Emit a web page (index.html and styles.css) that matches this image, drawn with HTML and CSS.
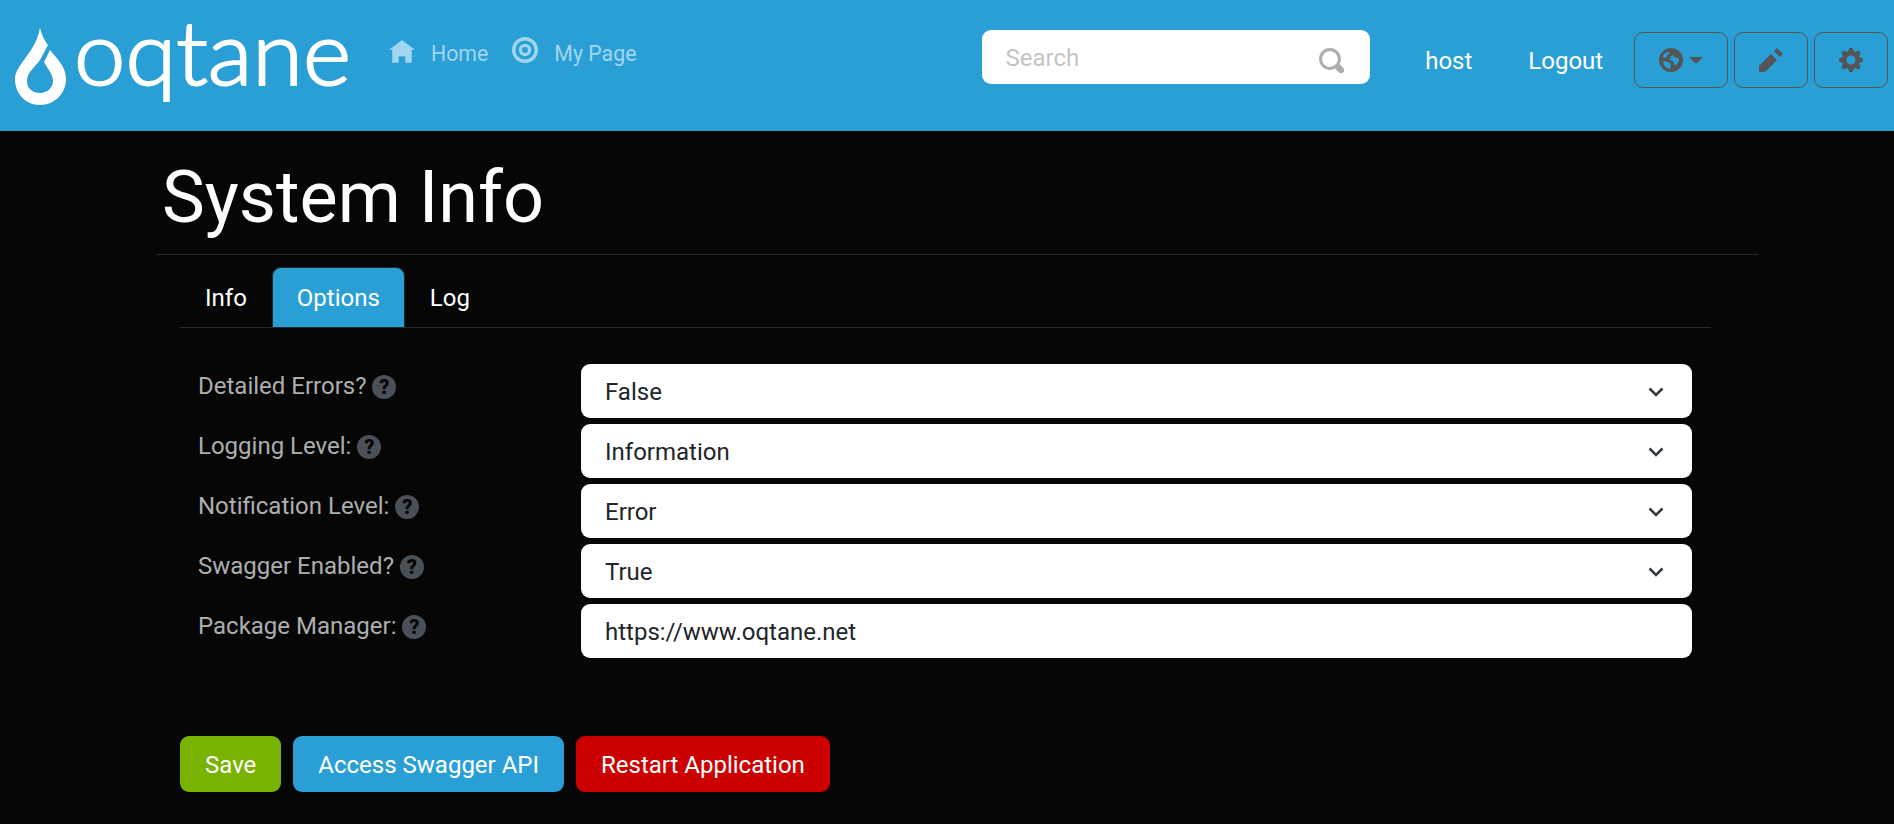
FILE: index.html
```html
<!DOCTYPE html>
<html>
<head>
	<title>System Info</title>
	<link rel="stylesheet" href="styles.css">
</head>
<body>
	<header class="topbar">
		<a class="logo">
			<svg class="logo-svg" width="389" height="131" viewBox="0 0 389 131">
				<path fill="#fff" d="M40 28C42 36 45 41 48 45L40 60C36 66 27 72 27 81 27 89 33 93 40 93 47 93 53 88 53 81 53 76 50 72 47 67L44 62 50 50C56 58 66 66 66 79 66 94 54 105 40 105 26 105 15 94 15 79 15 65 36 52 40 28Z"/>
				<text class="logo-text" x="74" y="85" textLength="277" lengthAdjust="spacingAndGlyphs">oqtane</text>
			</svg>
		</a>
		<nav class="menu">
			<a class="menu-link">
				<svg class="menu-icon" viewBox="0 0 8 8"><path d="M4 0l-4 3h1v4h2v-2h2v2h2v-4.03l1 .03-4-3z"/></svg>
				Home
			</a>
			<a class="menu-link">
				<svg class="menu-icon target" viewBox="0 0 26 26"><circle cx="13" cy="13" r="11.3" fill="none" stroke="#a1d6f0" stroke-width="3.4"/><circle cx="13" cy="13" r="4.6" fill="none" stroke="#a1d6f0" stroke-width="3.2"/></svg>
				My Page
			</a>
		</nav>
		<div class="search">
			<span class="search-text">Search</span>
			<svg class="search-icon" viewBox="0 0 8 8"><path d="M3.5 0c-1.93 0-3.5 1.57-3.5 3.5s1.57 3.5 3.5 3.5c.59 0 1.17-.14 1.66-.41a1 1 0 0 0 .13.13l1 1a1.02 1.02 0 1 0 1.44-1.44l-1-1a1 1 0 0 0-.16-.13c.27-.49.44-1.06.44-1.66 0-1.93-1.57-3.5-3.5-3.5zm0 1c1.39 0 2.5 1.11 2.5 2.5 0 .66-.24 1.27-.66 1.72-.01.01-.02.02-.03.03a1 1 0 0 0-.13.13c-.44.4-1.04.63-1.69.63-1.39 0-2.5-1.11-2.5-2.5s1.11-2.5 2.5-2.5z"/></svg>
		</div>
		<a class="user-link host">host</a>
		<a class="user-link logout">Logout</a>
		<button class="tool-btn globe-btn">
			<svg class="tool-icon" viewBox="0 0 24 24"><circle cx="12" cy="12" r="12"/><path fill="#2a9fd6" d="M5 6c1-1 3-2 5-2l1 1-3 2v2l-3 1-1-2zM12 8l2-1 1 2 4 1 1 2-1 3-2 2-2-1-1-3-3-1zM4 13l5 1 3 2-1 5-3-1-3-3z"/></svg>
			<span class="caret"></span>
		</button>
		<button class="tool-btn">
			<svg class="tool-icon" viewBox="0 0 8 8"><path d="M6 0l-1 1 2 2 1-1-2-2zm-2 2l-4 4v2h2l4-4-2-2z"/></svg>
		</button>
		<button class="tool-btn">
			<svg class="tool-icon" viewBox="0 0 8 8"><path d="M3.5 0l-.5 1.19c-.1.03-.19.08-.28.13l-1.19-.5-.72.72.5 1.19c-.05.1-.09.18-.13.28l-1.19.5v1l1.19.5c.04.1.08.18.13.28l-.5 1.19.72.72 1.19-.5c.09.04.18.09.28.13l.5 1.19h1l.5-1.19c.09-.04.19-.08.28-.13l1.19.5.72-.72-.5-1.19c.04-.09.09-.19.13-.28l1.19-.5v-1l-1.19-.5c-.03-.09-.08-.19-.13-.28l.5-1.19-.72-.72-1.19.5c-.09-.04-.19-.09-.28-.13l-.5-1.19h-1zm.5 2.5c.83 0 1.5.67 1.5 1.5s-.67 1.5-1.5 1.5-1.5-.67-1.5-1.5.67-1.5 1.5-1.5z"/></svg>
		</button>
	</header>

	<main class="content">
		<h1 class="page-title">System Info</h1>
		<div class="panel">
			<div class="tabs">
				<a class="tab">Info</a>
				<a class="tab active">Options</a>
				<a class="tab">Log</a>
			</div>
			<div class="rows">
				<div class="row">
					<label class="row-label">Detailed Errors? <span class="help">?</span></label>
					<div class="field select">False<svg class="chevron" viewBox="0 0 16 10"><path d="M1.5 1.5L8 8l6.5-6.5"/></svg></div>
				</div>
				<div class="row">
					<label class="row-label">Logging Level: <span class="help">?</span></label>
					<div class="field select">Information<svg class="chevron" viewBox="0 0 16 10"><path d="M1.5 1.5L8 8l6.5-6.5"/></svg></div>
				</div>
				<div class="row">
					<label class="row-label">Notification Level: <span class="help">?</span></label>
					<div class="field select">Error<svg class="chevron" viewBox="0 0 16 10"><path d="M1.5 1.5L8 8l6.5-6.5"/></svg></div>
				</div>
				<div class="row">
					<label class="row-label">Swagger Enabled? <span class="help">?</span></label>
					<div class="field select">True<svg class="chevron" viewBox="0 0 16 10"><path d="M1.5 1.5L8 8l6.5-6.5"/></svg></div>
				</div>
				<div class="row">
					<label class="row-label">Package Manager: <span class="help">?</span></label>
					<div class="field">https://www.oqtane.net</div>
				</div>
			</div>
			<div class="actions">
				<button class="btn btn-save">Save</button>
				<button class="btn btn-swagger">Access Swagger API</button>
				<button class="btn btn-restart">Restart Application</button>
			</div>
		</div>
	</main>
</body>
</html>
```

FILE: styles.css
```css
html, body {
	height: 100%;
}

body {
	margin: 0;
	background: #060606;
	color: #adafae;
	font-family: Roboto, sans-serif;
	font-size: 24px;
	overflow: hidden;
}

.topbar {
	display: flex;
	align-items: flex-start;
	height: 131px;
	background: #2a9fd6;
}

.logo {
	flex: none;
	width: 389px;
	height: 131px;
}

.logo-svg {
	overflow: visible;
}

.logo-text {
	font-family: Lato, sans-serif;
	font-size: 88px;
	font-weight: 300;
	fill: #fff;
	stroke: #fff;
	stroke-width: 2;
}

.menu {
	display: flex;
	gap: 24px;
	width: 594px;
	padding-top: 37px;
	font-size: 21.3px;
}

.menu-link {
	display: flex;
	align-items: center;
	gap: 16px;
	height: 32px;
	color: #a1d6f0;
}

.menu-icon {
	width: 26px;
	height: 26px;
	fill: #a1d6f0;
}

.target {
	margin-top: -6px;
}

.search {
	display: flex;
	align-items: center;
	justify-content: space-between;
	box-sizing: border-box;
	width: 388px;
	height: 54px;
	margin-top: 30px;
	padding: 2px 26px 0 23px;
	background: #fff;
	border-radius: 9px;
	color: #c4c4c4;
}

.search-icon {
	width: 25px;
	height: 25px;
	margin-top: 4px;
	fill: #adafae;
}

.user-link {
	padding-top: 45px;
	color: #fff;
	line-height: 32px;
}

.host {
	margin-left: 55px;
}

.logout {
	margin-left: 56px;
	margin-right: 31px;
}

.tool-btn {
	display: flex;
	align-items: center;
	justify-content: center;
	gap: 6px;
	box-sizing: border-box;
	width: 74px;
	height: 56px;
	margin: 32px 6px 0 0;
	padding: 0;
	background: transparent;
	border: 1px solid #555;
	border-radius: 9px;
}

.globe-btn {
	width: 94px;
}

.tool-icon {
	width: 24px;
	height: 24px;
	fill: #555;
}

.caret {
	width: 0;
	height: 0;
	border-top: 7px solid #555;
	border-left: 7px solid transparent;
	border-right: 7px solid transparent;
}

.content {
	margin: 0 136px 0 156px;
}

.page-title {
	margin: 0;
	padding: 24px 0 0 6px;
	height: 99px;
	color: #fff;
	font-size: 72px;
	font-weight: 400;
	line-height: 86px;
	border-bottom: 1px solid #282828;
}

.panel {
	margin: 12px 47px 0 24px;
}

.tabs {
	display: flex;
	height: 60px;
	padding-left: 1px;
	border-bottom: 1px solid #282828;
}

.tab {
	box-sizing: border-box;
	height: 61px;
	padding: 15px 24px 0;
	line-height: 32px;
	color: #fff;
	border-radius: 9px 9px 0 0;
}

.tab:first-child {
	padding-right: 25px;
}

.tab:last-child {
	padding-left: 25px;
}

.tab.active {
	background: #2a9fd6;
	border: 1px solid #282828;
	padding-top: 14px;
}

.rows {
	padding: 36px 19px 0 18px;
}

.row {
	display: flex;
	height: 54px;
	margin-bottom: 6px;
}

.row-label {
	flex: none;
	width: 383px;
	padding-top: 8px;
	line-height: 28px;
}

.help {
	display: inline-block;
	width: 24px;
	height: 24px;
	background: #495057;
	border-radius: 50%;
	color: #060606;
	font-size: 20px;
	font-weight: 900;
	line-height: 24px;
	text-align: center;
}

.field {
	display: flex;
	align-items: center;
	justify-content: space-between;
	box-sizing: border-box;
	flex: 1;
	padding: 2px 28px 0 24px;
	background: #fff;
	border-radius: 9px;
	color: #212529;
}

.chevron {
	width: 16px;
	height: 10px;
	fill: none;
	stroke: #343a40;
	stroke-width: 2.6;
}

.actions {
	display: flex;
	gap: 12px;
	margin-top: 78px;
}

.btn {
	height: 56px;
	padding: 2px 25px 0;
	border: none;
	border-radius: 9px;
	color: #fff;
	font-family: Roboto, sans-serif;
	font-size: 24px;
}

.btn-save {
	background: #77b300;
}

.btn-swagger {
	background: #2a9fd6;
}

.btn-restart {
	background: #c00;
}
```
